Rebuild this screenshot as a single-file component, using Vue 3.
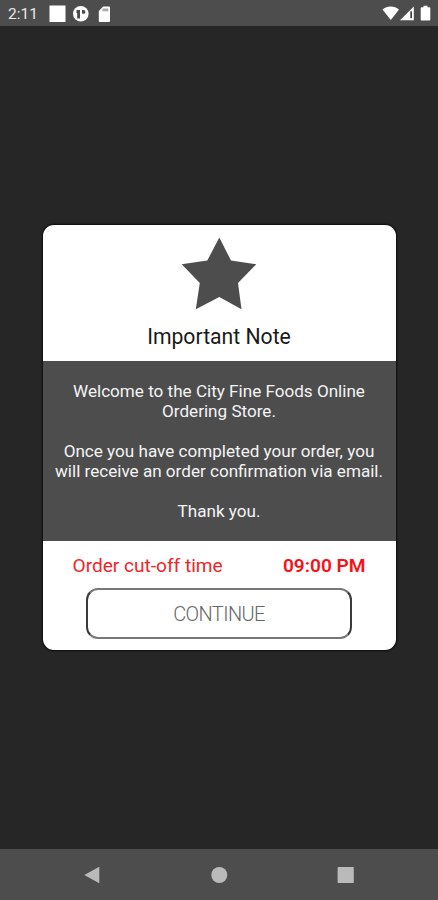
<script setup>
import { ref } from 'vue';

const time = ref('2:11');
const cutOff = ref('09:00 PM');
const open = ref(true);
</script>

<template>
  <div class="screen">
    <header class="status-bar">
      <span class="clock">{{ time }}</span>
      <svg class="notifications" width="64" height="20" viewBox="0 0 64 20">
        <rect x="1.5" y="1.5" width="16" height="16.5" fill="#fff" />
        <circle cx="32.8" cy="9.8" r="7.8" fill="#fff" />
        <path d="M28.500 6H32v8.500h-2.800V9h-.7z" fill="#4a4a4a" />
        <path d="M34 6h1.500a1.900 1.900 0 0 1 0 3.800H34z" fill="#4a4a4a" />
        <path d="M55.200 2.500H61a1 1 0 0 1 1 1v13.500a1 1 0 0 1-1 1h-9.200a1 1 0 0 1-1-1V7z" fill="#fff" />
        <path d="M54.500 4.500h5.800v2.800h-5.800z" fill="#aaa" />
      </svg>
      <svg class="system" width="50" height="20" viewBox="0 0 50 20">
        <path d="M.5 6.500C5 2.600 12.500 2.600 17 6.500L8.800 17z" fill="#fff" />
        <path d="M31.800 3.500v13.800H18z" fill="#fff" />
        <path d="M28.300 8.300h1.700v7h-1.700z" fill="#444" />
        <path d="M41.500 2.800h4v1.500h1.800q1 0 1 1v11.200q0 1-1 1h-7.600q-1 0-1-1V5.300q0-1 1-1h1.800z" fill="#fff" />
      </svg>
    </header>

    <main class="content">
      <section v-if="open" class="dialog">
        <div class="dialog-header">
          <svg class="star" width="76" height="74" viewBox="0 0 76 74">
            <path d="M38.300.5 50 23.600 75.300 27.300 57 46 60.500 72.200 38.300 60 14.800 72.200 18.800 46 .7 27.300 26.300 23.600z" fill="#4d4d4d" />
          </svg>
          <h1 class="title">Important Note</h1>
        </div>
        <div class="message">
          <p>Welcome to the City Fine Foods Online<br>Ordering Store.</p>
          <p>Once you have completed your order, you<br>will receive an order confirmation via email.</p>
          <p>Thank you.</p>
        </div>
        <div class="dialog-footer">
          <div class="cut-off">
            <span class="label">Order cut-off time</span>
            <strong class="value">{{ cutOff }}</strong>
          </div>
          <button class="continue" @click="open = false">CONTINUE</button>
        </div>
      </section>
    </main>

    <nav class="nav-bar">
      <svg width="18" height="18" viewBox="0 0 18 18"><path d="M16.300.8v16.400L1.300 9z" /></svg>
      <svg width="18" height="18" viewBox="0 0 18 18"><circle cx="9.300" cy="9" r="8" /></svg>
      <svg width="18" height="18" viewBox="0 0 18 18"><rect x=".6" y="1" width="16.200" height="16" rx=".8" /></svg>
    </nav>
  </div>
</template>

<style>
body {
  margin: 0;
  background: #262626;
}
</style>

<style scoped>
.screen {
  box-sizing: border-box;
  width: 438px;
  height: 900px;
  display: flex;
  flex-direction: column;
  background: #262626;
  font-family: Roboto, sans-serif;
}

.status-bar {
  height: 26px;
  box-sizing: border-box;
  padding: 0 8px;
  display: flex;
  align-items: center;
  background: #4d4d4d;
  color: #e8e8e8;
}

.clock {
  width: 40px;
  font-size: 15.5px;
  line-height: 26px;
  padding-top: 2px;
}

.notifications {
  margin-top: 1px;
}

.system {
  margin-left: auto;
  margin-right: -2px;
}

.content {
  flex: 1;
  display: flex;
  justify-content: center;
  align-items: flex-start;
  padding-top: 199px;
}

.dialog {
  width: 353px;
  height: 425px;
  border-radius: 11px;
  overflow: hidden;
  background: #fff;
  box-shadow: 0 0 2px 1px #0c0c0c;
}

.dialog-header {
  height: 135.5px;
  display: flex;
  flex-direction: column;
  align-items: center;
}

.star {
  margin-top: 12px;
}

.title {
  margin: 14px 0 0;
  font-size: 21.2px;
  font-weight: 400;
  line-height: 24px;
  color: #1a1a1a;
  white-space: nowrap;
}

.message {
  height: 180px;
  box-sizing: border-box;
  padding-top: 20.5px;
  background: #4d4d4d;
  color: #f4f4f4;
  font-size: 17.1px;
  line-height: 20px;
  text-align: center;
  white-space: nowrap;
}

.message p {
  margin: 0 0 20px;
}

.dialog-footer {
  padding: 13.5px 30px 0;
}

.cut-off {
  display: flex;
  justify-content: space-between;
  color: #f5222a;
  font-size: 19.1px;
  line-height: 24px;
  white-space: nowrap;
}

.value {
  font-weight: 600;
  color: #fa1018;
}

.continue {
  display: block;
  width: 266px;
  height: 51px;
  margin: 10px auto 0;
  padding: 1px 0 0;
  border: 2px solid;
  border-color: #777 #3a3a3a;
  border-radius: 12px;
  background: #fff;
  color: #666;
  font-family: inherit;
  font-size: 20px;
  font-weight: 300;
  letter-spacing: -0.6px;
}

.nav-bar {
  height: 51px;
  display: flex;
  justify-content: center;
  align-items: center;
  gap: 109px;
  background: #4d4d4d;
}

.nav-bar svg {
  fill: #bababa;
}
</style>
